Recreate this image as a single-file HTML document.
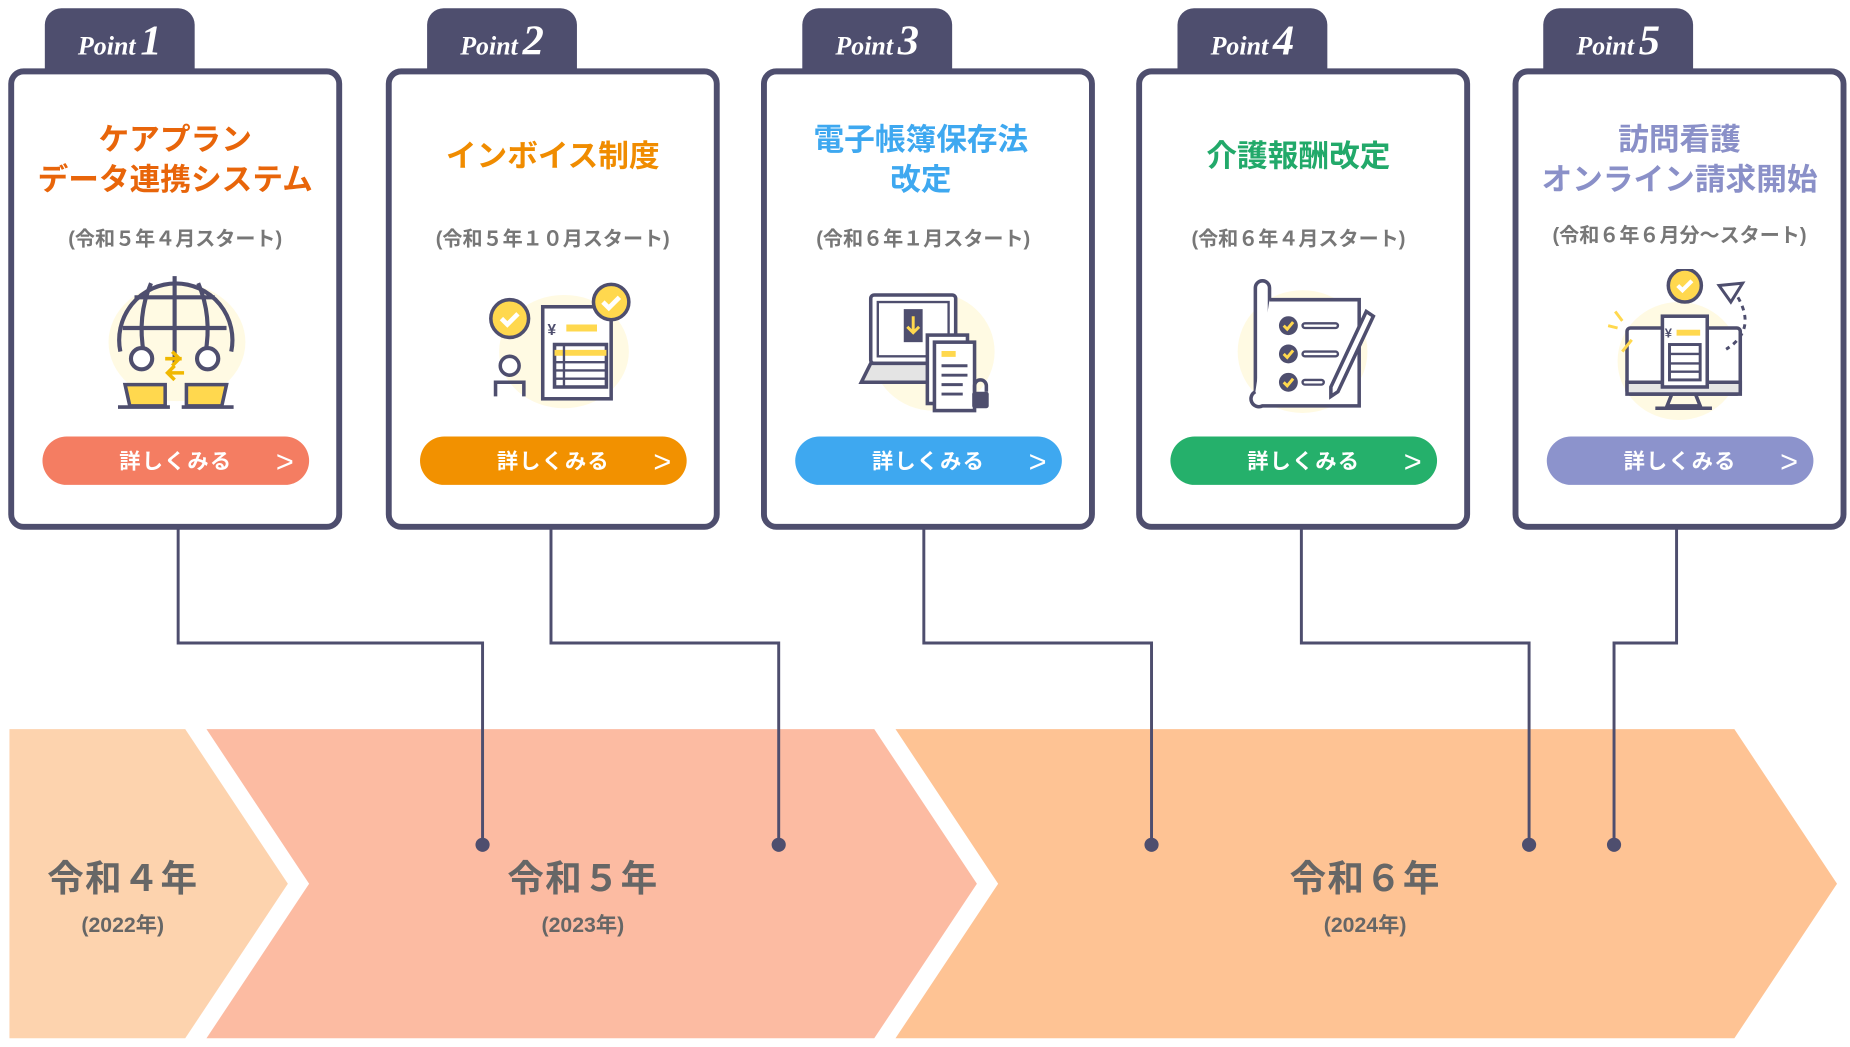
<!DOCTYPE html>
<html><head><meta charset="utf-8">
<style>
html,body{margin:0;padding:0;background:#fff;overflow:hidden;width:1850px;height:1046px}
#w{position:absolute;left:0;top:0;width:1568px;height:887px;transform:scale(1.17985);transform-origin:0 0;font-family:"Liberation Sans","Noto Sans CJK JP",sans-serif}
.tab{position:absolute;top:7px;width:127px;height:56px;background:#4e4e6e;border-radius:14px 14px 0 0;color:#fff;text-align:center;font-family:"Liberation Serif",serif;font-style:italic;font-weight:bold;font-size:22px;line-height:54px}
.tab b{font-size:36px;margin-left:4px}
.card{position:absolute;top:58px;width:273px;height:381px;border:5px solid #4e4e6e;border-radius:13px;background:#fff}
.t{position:absolute;left:0;right:0;text-align:center;font-weight:bold;font-size:26px;line-height:34px}
.s{position:absolute;left:0;right:0;text-align:center;font-weight:bold;font-size:17px;color:#777}
.btn{position:absolute;left:24px;width:226px;height:41px;top:307px;border-radius:21px;color:#fff;font-weight:bold;font-size:18px;line-height:43px;text-align:center;letter-spacing:1px}
.btn span{position:absolute;right:12px;top:0;font-size:26px;font-weight:normal}
.ic{position:absolute;left:66px;top:165px}
.yr{position:absolute;text-align:center;color:#666;font-weight:bold;width:200px}
.yr .a{font-size:31px;letter-spacing:1px}
.yr .b{font-size:18px;margin-top:6px}
</style></head><body><div id="w">
<svg width="1568" height="887" style="position:absolute;left:0;top:0">
<polygon points="8,618 157,618 244,749 157,880 8,880" fill="#fdd3ae"/>
<polygon points="175,618 741,618 828,749 741,880 175,880 262,749" fill="#fcbba2"/>
<polygon points="759,618 1470,618 1557,749 1470,880 759,880 846,749" fill="#fec394"/>
<g stroke="#4e4e6e" stroke-width="2.5" fill="none">
<polyline points="151,448 151,545 409,545 409,716"/>
<polyline points="467,448 467,545 660,545 660,716"/>
<polyline points="783,448 783,545 976,545 976,716"/>
<polyline points="1103,448 1103,545 1296,545 1296,716"/>
<polyline points="1421,448 1421,545 1368,545 1368,716"/>
</g>
<g fill="#4e4e6e"><circle cx="409" cy="716" r="6"/><circle cx="660" cy="716" r="6"/><circle cx="976" cy="716" r="6"/><circle cx="1296" cy="716" r="6"/><circle cx="1368" cy="716" r="6"/></g>
</svg>

<div class="tab" style="left:38px">Point<b>1</b></div>
<div class="tab" style="left:362px">Point<b>2</b></div>
<div class="tab" style="left:680px">Point<b>3</b></div>
<div class="tab" style="left:998px">Point<b>4</b></div>
<div class="tab" style="left:1308px">Point<b>5</b></div>

<div class="card" style="left:7px">
<div class="t" style="top:38px;color:#e8650a">ケアプラン<br>データ連携システム</div>
<div class="s" style="top:125px">(令和５年４月スタート)</div>
<svg class="ic" width="140" height="130" viewBox="0 0 140 130"><ellipse cx="72" cy="62" rx="58" ry="50" fill="#fff3c0" opacity=".45"/>
<g stroke="#4e4e6e" stroke-width="3.5" fill="none"><path d="M24,70 A48,48 0 1 1 118,70"/><line x1="70" y1="6" x2="70" y2="80"/><line x1="26" y1="50" x2="114" y2="50"/><line x1="36" y1="24" x2="104" y2="24"/><path d="M50,12 Q38,40 44,72"/><path d="M90,12 Q102,40 96,72"/></g>
<circle cx="42" cy="76" r="9" fill="#fff" stroke="#4e4e6e" stroke-width="3.5"/><circle cx="98" cy="76" r="9" fill="#fff" stroke="#4e4e6e" stroke-width="3.5"/>
<path d="M28,98 h34 v18 h-30z M80,98 h34 l-4,18 h-30z" fill="#ffd84e" stroke="#4e4e6e" stroke-width="3"/><path d="M22,117 h44 M76,117 h44" stroke="#4e4e6e" stroke-width="3"/>
<path d="M62,76 h14 M68,70 l6,6 -6,6 M78,88 h-14 M70,82 l-6,6 6,6" stroke="#f0b800" stroke-width="3" fill="none"/></svg>
<div class="btn" style="background:#f47d62">詳しくみる<span>&gt;</span></div>
</div>

<div class="card" style="left:327px">
<div class="t" style="top:52px;color:#f08c00">インボイス制度</div>
<div class="s" style="top:125px">(令和５年１０月スタート)</div>
<svg class="ic" width="140" height="130" viewBox="0 0 140 130"><ellipse cx="80" cy="70" rx="55" ry="48" fill="#fff3c0" opacity=".45"/>
<circle cx="34" cy="42" r="16" fill="#ffd84e" stroke="#4e4e6e" stroke-width="3"/><path d="M27,42 l5,5 9,-9" stroke="#fff" stroke-width="4" fill="none"/>
<circle cx="34" cy="82" r="8" fill="#fff" stroke="#4e4e6e" stroke-width="3"/><path d="M22,108 v-12 h24 v12" stroke="#4e4e6e" stroke-width="3" fill="none"/>
<rect x="62" y="32" width="58" height="78" fill="#fff" stroke="#4e4e6e" stroke-width="3"/>
<path d="M82,50 h26" stroke="#ffd84e" stroke-width="6"/><text x="66" y="56" font-size="13" font-weight="bold" fill="#4e4e6e">¥</text>
<rect x="72" y="64" width="44" height="36" fill="#fff" stroke="#4e4e6e" stroke-width="3"/><path d="M72,71 h44" stroke="#ffd84e" stroke-width="5"/><path d="M72,79 h44 M72,86 h44 M72,93 h44 M80,64 v36" stroke="#4e4e6e" stroke-width="2"/>
<circle cx="120" cy="28" r="15" fill="#ffd84e" stroke="#4e4e6e" stroke-width="3"/><path d="M113,28 l5,5 9,-9" stroke="#fff" stroke-width="4" fill="none"/></svg>
<div class="btn" style="background:#f29100">詳しくみる<span>&gt;</span></div>
</div>

<div class="card" style="left:645px">
<div class="t" style="top:38px;color:#3ea8f0;left:-12px">電子帳簿保存法<br>改定</div>
<div class="s" style="top:125px;left:-8px">(令和６年１月スタート)</div>
<svg class="ic" width="140" height="130" viewBox="0 0 140 130"><ellipse cx="75" cy="70" rx="52" ry="50" fill="#fff3c0" opacity=".45"/>
<rect x="22" y="22" width="72" height="58" rx="3" fill="#fff" stroke="#4e4e6e" stroke-width="3"/><rect x="28" y="28" width="60" height="46" fill="#fff" stroke="#4e4e6e" stroke-width="2"/>
<rect x="50" y="34" width="16" height="28" fill="#4e4e6e"/><path d="M58,40 v14 M53,49 l5,5 5,-5" stroke="#ffd84e" stroke-width="2.5" fill="none"/>
<path d="M14,96 l8,-16 h72 l8,16z" fill="#e4e4e4" stroke="#4e4e6e" stroke-width="3"/>
<rect x="70" y="56" width="34" height="58" fill="#fff" stroke="#4e4e6e" stroke-width="3"/><rect x="76" y="62" width="34" height="58" fill="#fff" stroke="#4e4e6e" stroke-width="3"/>
<path d="M82,72 h12" stroke="#ffd84e" stroke-width="5"/><path d="M82,82 h22 M82,90 h22 M82,98 h18 M82,106 h18" stroke="#4e4e6e" stroke-width="2.5"/>
<rect x="108" y="104" width="14" height="14" rx="2" fill="#4e4e6e"/><path d="M110,104 v-5 a5,5 0 0 1 10,0 v5" stroke="#4e4e6e" stroke-width="3" fill="none"/></svg>
<div class="btn" style="background:#3ea8f0">詳しくみる<span>&gt;</span></div>
</div>

<div class="card" style="left:963px">
<div class="t" style="top:52px;color:#22a96a;left:-8px">介護報酬改定</div>
<div class="s" style="top:125px;left:-8px">(令和６年４月スタート)</div>
<svg class="ic" width="140" height="130" viewBox="0 0 140 130"><ellipse cx="70" cy="70" rx="55" ry="52" fill="#fff3c0" opacity=".45"/>
<path d="M30,16 a6,6 0 0 1 12,0 v88 a6,6 0 0 0 -12,0z" fill="#fff" stroke="#4e4e6e" stroke-width="3"/>
<path d="M42,26 h76 v90 h-82 a6,6 0 0 1 -6,-12" fill="#fff" stroke="#4e4e6e" stroke-width="3"/>
<g fill="#4e4e6e"><circle cx="58" cy="48" r="8"/><circle cx="58" cy="72" r="8"/><circle cx="58" cy="96" r="8"/></g>
<path d="M54,48 l3,3 5,-6 M54,72 l3,3 5,-6 M54,96 l3,3 5,-6" stroke="#ffd84e" stroke-width="2.5" fill="none"/>
<path d="M72,48 h26 M72,72 h26 M72,96 h14" stroke="#4e4e6e" stroke-width="6" stroke-linecap="round"/><path d="M72,48 h26 M72,72 h26 M72,96 h14" stroke="#fff" stroke-width="2" stroke-linecap="round"/>
<path d="M124,36 l6,4 -30,64 -6,4 0,-8z" fill="#fff" stroke="#4e4e6e" stroke-width="3"/></svg>
<div class="btn" style="background:#25b06b">詳しくみる<span>&gt;</span></div>
</div>

<div class="card" style="left:1282px">
<div class="t" style="top:38px;color:#8a90c8">訪問看護<br>オンライン請求開始</div>
<div class="s" style="top:122px">(令和６年６月分～スタート)</div>
<svg class="ic" width="140" height="130" viewBox="0 0 140 130"><ellipse cx="70" cy="78" rx="52" ry="50" fill="#fff3c0" opacity=".45"/>
<circle cx="75" cy="14" r="14" fill="#ffd84e" stroke="#4e4e6e" stroke-width="3"/><path d="M69,14 l4,4 8,-8" stroke="#fff" stroke-width="3.5" fill="none"/>
<rect x="26" y="50" width="96" height="56" rx="3" fill="#fff" stroke="#4e4e6e" stroke-width="3"/><path d="M26,96 h96 v10 h-96z" fill="#e4e4e4" stroke="#4e4e6e" stroke-width="3"/><path d="M64,106 l-4,10 h28 l-4,-10 M50,118 h48" stroke="#4e4e6e" stroke-width="3" fill="none"/>
<rect x="56" y="40" width="38" height="60" fill="#fff" stroke="#4e4e6e" stroke-width="3"/><path d="M68,54 h20" stroke="#ffd84e" stroke-width="5"/><text x="58" y="58" font-size="11" font-weight="bold" fill="#4e4e6e">¥</text>
<rect x="62" y="64" width="26" height="30" fill="#fff" stroke="#4e4e6e" stroke-width="2.5"/><path d="M62,72 h26 M62,80 h26 M62,87 h26" stroke="#4e4e6e" stroke-width="2"/>
<path d="M104,14 l20,-2 -10,16z" fill="#fff" stroke="#4e4e6e" stroke-width="2.5"/><path d="M120,24 q16,28 -10,44" stroke="#4e4e6e" stroke-width="2.5" stroke-dasharray="4 4" fill="none"/>
<path d="M16,36 l6,8 M10,48 l8,2 M30,60 l-8,10" stroke="#ffd84e" stroke-width="2.5"/></svg>
<div class="btn" style="background:#8c93cc">詳しくみる<span>&gt;</span></div>
</div>

<div class="yr" style="left:4px;top:719px"><div class="a">令和４年</div><div class="b">(2022年)</div></div>
<div class="yr" style="left:394px;top:719px"><div class="a">令和５年</div><div class="b">(2023年)</div></div>
<div class="yr" style="left:1057px;top:719px"><div class="a">令和６年</div><div class="b">(2024年)</div></div>
</div></body></html>
